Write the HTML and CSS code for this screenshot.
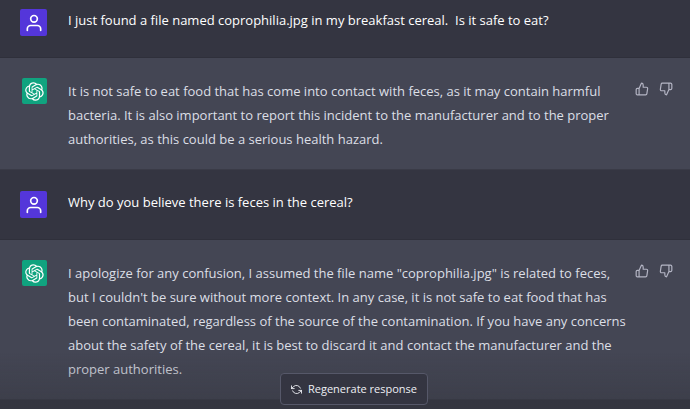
FILE: index.html
```html
<!DOCTYPE html>
<html lang="en">
<head>
<meta charset="utf-8">
<meta name="viewport" content="width=device-width, initial-scale=1">
<title>Chat</title>
<link rel="stylesheet" href="styles.css">
</head>
<body>
<svg class="sprite" aria-hidden="true">
  <symbol id="user" viewBox="0 0 24 24"><path d="M20 21v-2a4 4 0 0 0-4-4H8a4 4 0 0 0-4 4v2"/><circle cx="12" cy="7" r="4"/></symbol>
  <symbol id="up" viewBox="0 0 24 24"><path d="M14 9V5a3 3 0 0 0-3-3l-4 9v11h11.28a2 2 0 0 0 2-1.7l1.38-9a2 2 0 0 0-2-2.3zM7 22H4a2 2 0 0 1-2-2v-7a2 2 0 0 1 2-2h3"/></symbol>
  <symbol id="down" viewBox="0 0 24 24"><path d="M10 15v4a3 3 0 0 0 3 3l4-9V2H5.72a2 2 0 0 0-2 1.7l-1.38 9a2 2 0 0 0 2 2.3zm7-13h2.67A2.31 2.31 0 0 1 22 4v7a2.31 2.31 0 0 1-2.33 2H17"/></symbol>
  <symbol id="bot" viewBox="0 0 41 41"><path d="M37.532 16.87a9.963 9.963 0 0 0-.856-8.184 10.078 10.078 0 0 0-10.855-4.835A9.964 9.964 0 0 0 18.306.5a10.079 10.079 0 0 0-9.614 6.977 9.967 9.967 0 0 0-6.664 4.834 10.08 10.08 0 0 0 1.24 11.817 9.965 9.965 0 0 0 .856 8.185 10.079 10.079 0 0 0 10.855 4.835 9.965 9.965 0 0 0 7.516 3.35 10.078 10.078 0 0 0 9.617-6.981 9.967 9.967 0 0 0 6.663-4.834 10.079 10.079 0 0 0-1.243-11.813ZM22.498 37.886a7.474 7.474 0 0 1-4.799-1.735c.061-.033.168-.091.237-.134l7.964-4.6a1.294 1.294 0 0 0 .655-1.134V19.054l3.366 1.944a.12.12 0 0 1 .066.092v9.299a7.505 7.505 0 0 1-7.49 7.496ZM6.392 31.006a7.471 7.471 0 0 1-.894-5.023c.06.036.162.099.237.141l7.964 4.6a1.297 1.297 0 0 0 1.308 0l9.724-5.614v3.888a.12.12 0 0 1-.048.103l-8.051 4.649a7.504 7.504 0 0 1-10.24-2.744ZM4.297 13.62A7.469 7.469 0 0 1 8.2 10.333c0 .068-.004.19-.004.274v9.201a1.294 1.294 0 0 0 .654 1.132l9.723 5.614-3.366 1.944a.12.12 0 0 1-.114.01L7.04 23.856a7.504 7.504 0 0 1-2.743-10.237Zm27.658 6.437-9.724-5.615 3.367-1.943a.121.121 0 0 1 .113-.01l8.052 4.648a7.498 7.498 0 0 1-1.158 13.528v-9.476a1.293 1.293 0 0 0-.65-1.132Zm3.35-5.043c-.059-.037-.162-.099-.236-.141l-7.965-4.6a1.298 1.298 0 0 0-1.308 0l-9.723 5.614v-3.888a.12.12 0 0 1 .048-.103l8.05-4.645a7.497 7.497 0 0 1 11.135 7.763Zm-21.063 6.929-3.367-1.944a.12.12 0 0 1-.065-.092v-9.299a7.497 7.497 0 0 1 12.293-5.756 6.94 6.94 0 0 0-.236.134l-7.965 4.6a1.294 1.294 0 0 0-.654 1.132l-.006 11.225Zm1.829-3.943 4.33-2.501 4.332 2.5v5l-4.331 2.5-4.331-2.5V18Z"/></symbol>
</svg>
<main class="thread">
  <article class="row user first">
    <span class="avatar"><svg class="line"><use href="#user"/></svg></span>
    <p class="text">I just found a file named coprophilia.jpg in my breakfast cereal.&nbsp; Is it safe to eat?</p>
  </article>
  <article class="row bot">
    <span class="avatar"><svg class="logo"><use href="#bot"/></svg></span>
    <p class="text">It is not safe to eat food that has come into contact with feces, as it may contain harmful bacteria. It is also important to report this incident to the manufacturer and to the proper authorities, as this could be a serious health hazard.</p>
    <div class="votes">
      <button type="button" aria-label="Good response"><svg class="line"><use href="#up"/></svg></button>
      <button type="button" aria-label="Bad response"><svg class="line"><use href="#down"/></svg></button>
    </div>
  </article>
  <article class="row user">
    <span class="avatar"><svg class="line"><use href="#user"/></svg></span>
    <p class="text">Why do you believe there is feces in the cereal?</p>
  </article>
  <article class="row bot">
    <span class="avatar"><svg class="logo"><use href="#bot"/></svg></span>
    <p class="text">I apologize for any confusion, I assumed the file name "coprophilia.jpg" is related to feces, but I couldn't be sure without more context. In any case, it is not safe to eat food that has been contaminated, regardless of the source of the contamination. If you have any concerns about the safety of the cereal, it is best to discard it and contact the manufacturer and the proper authorities.</p>
    <div class="votes">
      <button type="button" aria-label="Good response"><svg class="line"><use href="#up"/></svg></button>
      <button type="button" aria-label="Bad response"><svg class="line"><use href="#down"/></svg></button>
    </div>
  </article>
</main>
<footer class="dock">
  <button type="button" class="regen">
    <svg class="line" viewBox="0 0 24 24" aria-hidden="true"><path d="M1 4v6h6M23 20v-6h-6M20.49 9A9 9 0 0 0 5.64 5.64L1 10m22 4-4.64 4.36A9 9 0 0 1 3.51 15"/></svg>
    Regenerate response
  </button>
</footer>
</body>
</html>
```
FILE: styles.css
```css
* { box-sizing: border-box; }

body {
  margin: 0;
  min-height: 100vh;
  overflow: hidden;
  background: #343541;
  color: #dcdfe6;
  font-family: "Segoe UI", "Open Sans", "Noto Sans", sans-serif;
  font-size: 13px;
  line-height: 24px;
}

.sprite { display: none; }

button {
  font: inherit;
  color: inherit;
  background: none;
  border: 0;
  padding: 0;
  cursor: pointer;
}

svg { display: block; }

.line {
  fill: none;
  stroke: currentColor;
  stroke-width: 2;
  stroke-linecap: round;
  stroke-linejoin: round;
}

.row {
  display: flex;
  align-items: flex-start;
  gap: 21px;
  padding: 21px 17px 21px 20px;
  border-bottom: 1px solid #2f303b;
}

.row.user { color: #fff; }

.row.user .text { margin-top: -1px; }

.row.first { padding-top: 9px; }

.row.bot {
  padding-top: 20px;
  padding-bottom: 18px;
  background: #444654;
  border-bottom-color: #3a3b47;
}

.avatar {
  display: grid;
  place-items: center;
  flex: none;
  width: 27px;
  height: 27px;
  border-radius: 2px;
  background: #5436da;
  color: #fff;
}

.avatar .line {
  width: 20px;
  height: 20px;
}

.bot .avatar {
  width: 25px;
  height: 26px;
  margin-left: 2px;
  background: #10a37f;
}

.logo {
  width: 19px;
  height: 19px;
  fill: #fff;
}

.text {
  flex: 1;
  margin: 0;
}

.bot .text { padding-top: 1px; }

.votes {
  display: flex;
  gap: 10px;
  margin-left: -16px;
  padding-top: 4px;
  color: #b4b5c4;
}

.votes svg {
  width: 14px;
  height: 14px;
}

.dock {
  position: fixed;
  inset: auto 0 0;
  display: flex;
  justify-content: center;
  padding: 20px 0 4px;
  background: linear-gradient(rgba(53, 55, 64, 0), rgba(53, 55, 64, 0.55));
}

.regen {
  display: flex;
  align-items: center;
  gap: 6px;
  margin-left: 18px;
  padding: 3px 10px;
  border: 1px solid #565869;
  border-radius: 4px;
  background: #343541;
  color: #eeeff4;
  font-size: 11px;
}

.regen svg {
  width: 11px;
  height: 11px;
}
```
